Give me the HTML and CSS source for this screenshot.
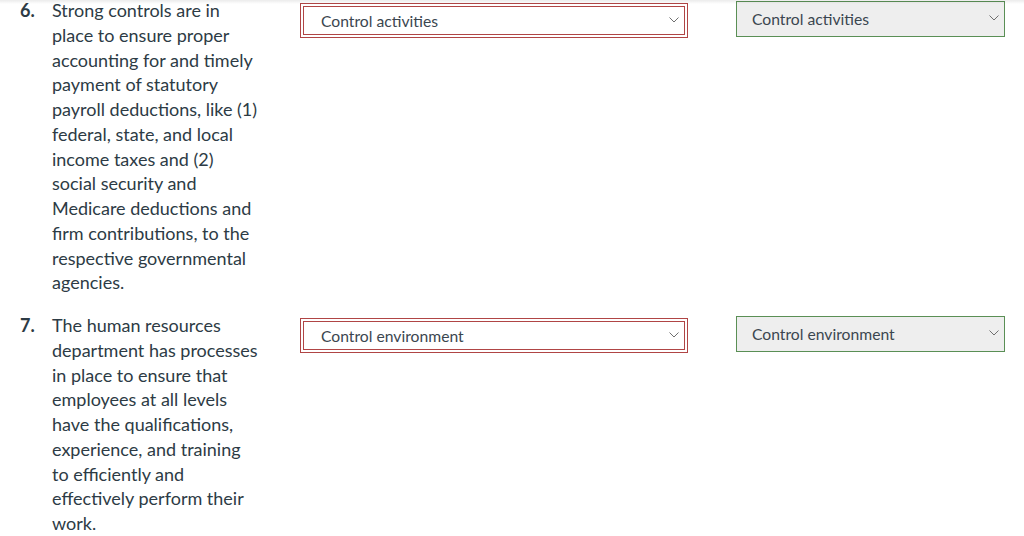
FILE: index.html
```html
<!DOCTYPE html>
<html lang="en">
<head>
<meta charset="utf-8">
<title>Internal control components</title>
<link rel="stylesheet" href="styles.css">
</head>
<body>
<div class="top-shade"></div>
<div class="list">
  <div class="item item-6">
    <div class="num">6.</div>
    <div class="text">Strong controls are in place to ensure proper accounting for and timely payment of statutory payroll deductions, like (1) federal, state, and local income taxes and (2) social security and Medicare deductions and firm contributions, to the respective governmental agencies.</div>
    <div class="answer">
      <div class="select-wrap wrong">
        <div class="select">
          <span>Control activities</span>
          <svg class="chev" width="10" height="6" viewBox="0 0 10 6"><path d="M0.5 0.5 L5 5 L9.5 0.5" fill="none" stroke="#6f6f6f" stroke-width="1"/></svg>
        </div>
      </div>
    </div>
    <div class="correct">
      <div class="select green">
        <span>Control activities</span>
        <svg class="chev" width="10" height="6" viewBox="0 0 10 6"><path d="M0.5 0.5 L5 5 L9.5 0.5" fill="none" stroke="#6f6f6f" stroke-width="1"/></svg>
      </div>
    </div>
  </div>
  <div class="item item-7">
    <div class="num">7.</div>
    <div class="text">The human resources department has processes in place to ensure that employees at all levels have the qualifications, experience, and training to efficiently and effectively perform their work.</div>
    <div class="answer">
      <div class="select-wrap wrong">
        <div class="select">
          <span>Control environment</span>
          <svg class="chev" width="10" height="6" viewBox="0 0 10 6"><path d="M0.5 0.5 L5 5 L9.5 0.5" fill="none" stroke="#6f6f6f" stroke-width="1"/></svg>
        </div>
      </div>
    </div>
    <div class="correct">
      <div class="select green">
        <span>Control environment</span>
        <svg class="chev" width="10" height="6" viewBox="0 0 10 6"><path d="M0.5 0.5 L5 5 L9.5 0.5" fill="none" stroke="#6f6f6f" stroke-width="1"/></svg>
      </div>
    </div>
  </div>
</div>
</body>
</html>
```

FILE: styles.css
```css
html, body {
  margin: 0;
  padding: 0;
  background: #ffffff;
}
body {
  font-family: Lato, "Liberation Sans", sans-serif;
  color: #2d3b45;
  overflow: hidden;
}
.top-shade {
  position: absolute;
  left: 0;
  top: 0;
  width: 100%;
  height: 4px;
  background: linear-gradient(to bottom, rgba(0,0,0,0.08), rgba(0,0,0,0));
}
.list {
  margin-top: -2px;
  padding-left: 20px;
}
.item {
  display: flex;
  align-items: flex-start;
  font-size: 18px;
  line-height: 24.75px;
}
.item + .item {
  margin-top: 18px;
}
.num {
  width: 32px;
  flex: none;
  font-weight: bold;
}
.text {
  width: 206px;
  flex: none;
}
.answer {
  margin-left: 42px;
  padding-top: 5px;
  flex: none;
}
.select-wrap.wrong {
  border: 1px solid #b04545;
  padding: 2px;
  box-sizing: border-box;
  width: 388px;
  height: 35px;
}
.select {
  box-sizing: border-box;
  height: 100%;
  display: flex;
  align-items: center;
  justify-content: space-between;
  font-size: 15.7px;
  color: #3b4650;
  background: #ffffff;
}
.select-wrap.wrong .select {
  border: 1px solid #b04545;
  padding: 1px 5px 0 17px;
}
.select .chev {
  display: block;
  margin-top: -3px;
}
.correct {
  margin-left: 48px;
  padding-top: 3px;
  flex: none;
}
.select.green {
  width: 269px;
  height: 36px;
  border: 1px solid #5a8f55;
  background: #eeeeee;
  padding: 0 5px 0 15px;
}
```
